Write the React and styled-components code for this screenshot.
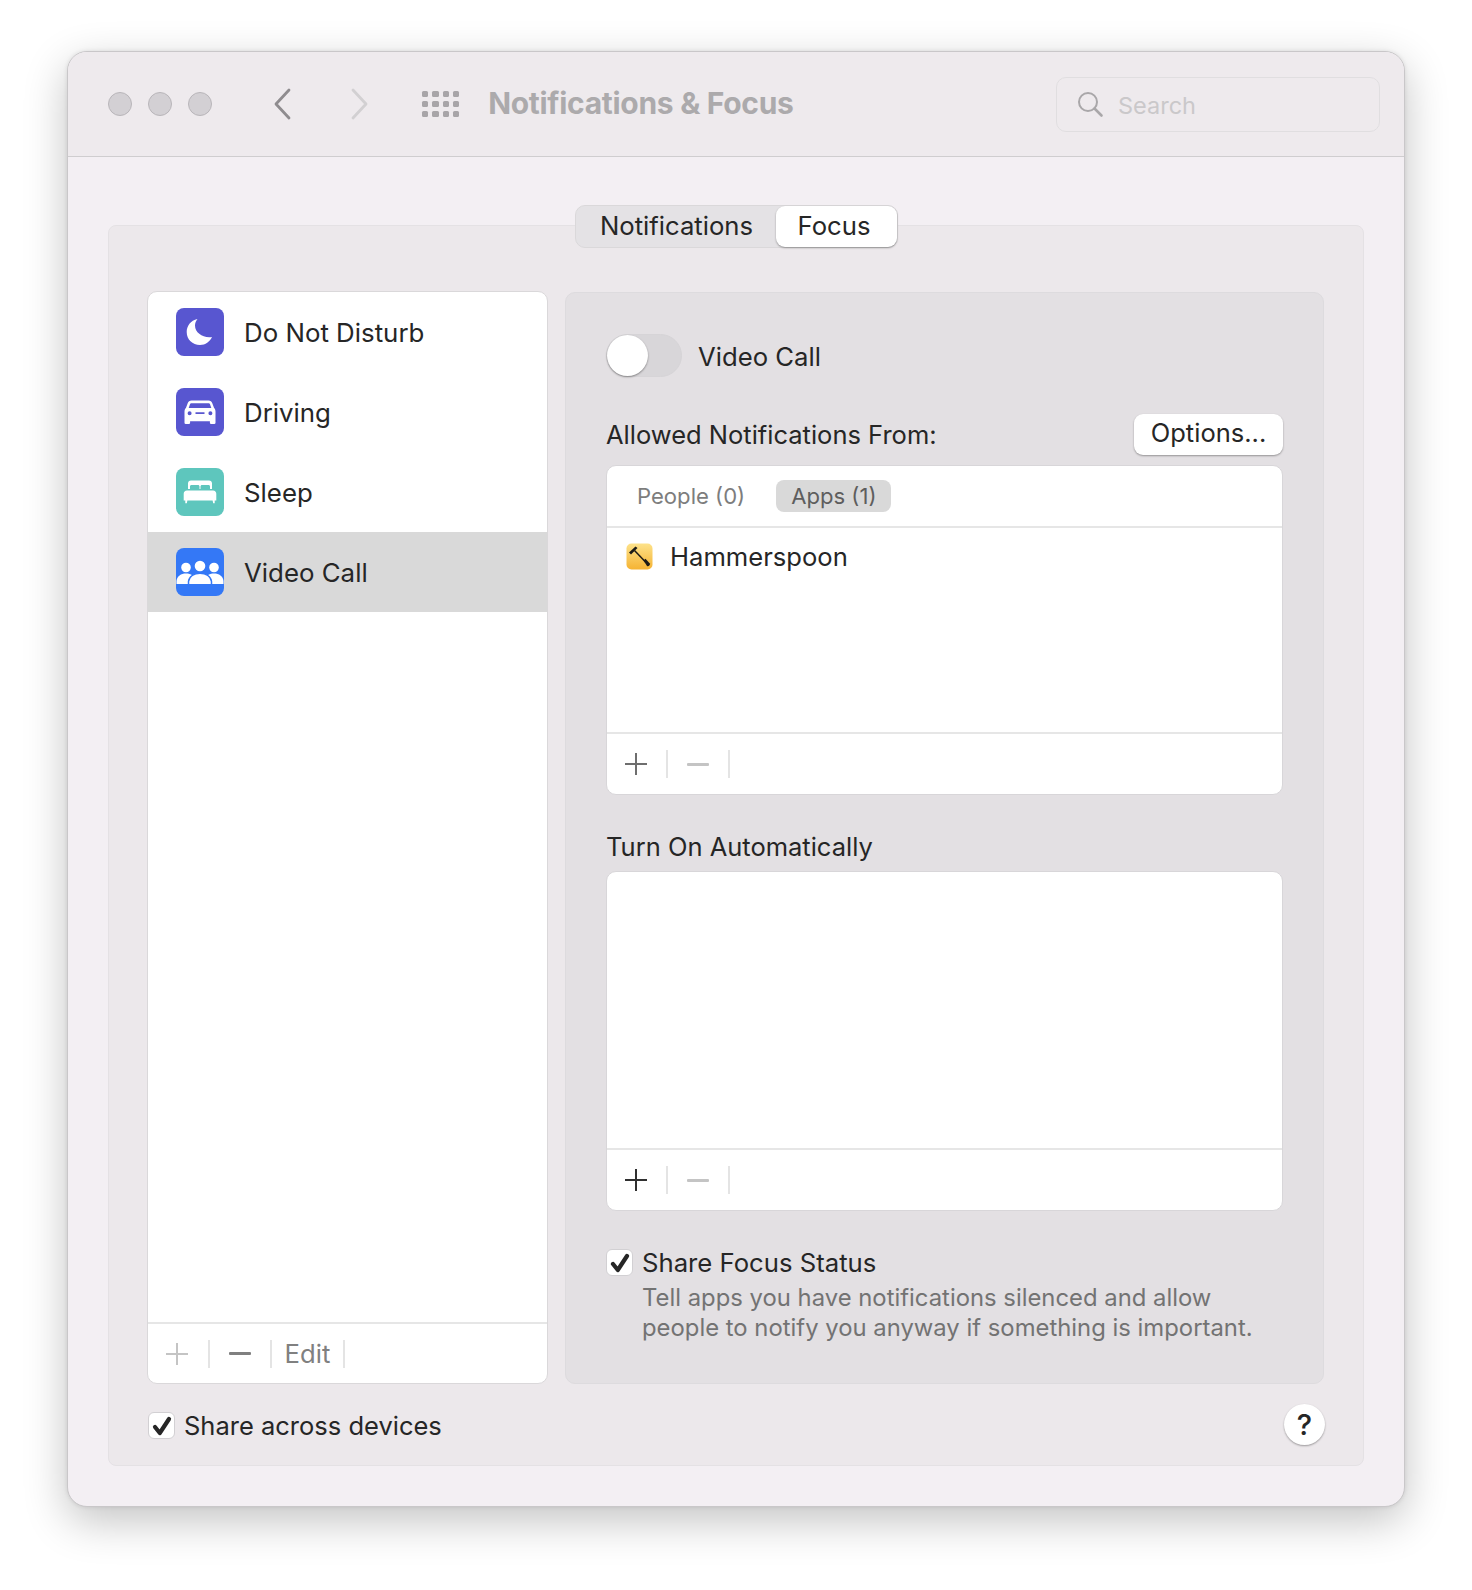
import React from "react";
import styled, { createGlobalStyle } from "styled-components";

const GlobalStyle = createGlobalStyle`
  html, body {
    margin: 0;
    background: #ffffff;
    font-family: Inter, "Liberation Sans", sans-serif;
    color: #262626;
  }
`;

const MoonIcon = () => (
  <svg width="48" height="48" viewBox="0 0 48 48">
    <path
      fill="#fff"
      d="M21.5 11C14.5 12.5 10.7 18 10.7 24C10.7 31.5 16.5 37 24 37C29.5 37 33.8 33.5 36 29C27.5 30.5 19 25 19 17.5C19 15 20 13 21.5 11Z"
    />
  </svg>
);

const CarIcon = () => (
  <svg width="48" height="48" viewBox="0 0 48 48">
    <path
      fill="#fff"
      fillRule="evenodd"
      d="M15.5 12.5H32.500C34.500 12.500 35.600 13.500 36.200 15L38 19.800C39.200 21 39.500 22.200 39.500 24V34.800A1.300 1.300 0 0 1 38.200 36.100H35.200A1.300 1.300 0 0 1 33.900 34.800V33.300H14.100V34.800A1.300 1.300 0 0 1 12.800 36.100H9.800A1.300 1.300 0 0 1 8.500 34.800V24C8.500 22.200 8.800 21 10 19.800L11.800 15C12.400 13.500 13.500 12.500 15.500 12.500ZM15.500 15.200C14.800 15.200 14.300 15.500 14 16.300L12.700 19.900H35.300L34 16.300C33.700 15.500 33.200 15.200 32.500 15.200ZM13.600 23.200A2 2 0 1 0 13.600 27.200A2 2 0 1 0 13.600 23.200ZM34.400 23.200A2 2 0 1 0 34.400 27.200A2 2 0 1 0 34.400 23.200ZM19.500 24.300V26.100H28.500V24.300Z"
    />
  </svg>
);

const BedIcon = () => (
  <svg width="48" height="48" viewBox="0 0 48 48">
    <path
      fill="#fff"
      fillRule="evenodd"
      d="M12 21V15.500C12 13.600 13.200 12.500 15 12.500H33C34.800 12.500 36 13.600 36 15.500V21H34V18.500C34 17.600 33.400 17 32.500 17H26C25.100 17 24.500 17.600 24.500 18.500V21H23.500V18.500C23.500 17.600 22.900 17 22 17H15.500C14.600 17 14 17.600 14 18.500V21ZM11 22.500H37C39 22.500 40.300 23.800 40.300 25.800V32.500H38.700V35.200H37.200L36.600 32.500H11.400L10.800 35.200H9.300V32.500H7.700V25.800C7.700 23.800 9 22.500 11 22.500Z"
    />
  </svg>
);

const PeopleIcon = () => (
  <svg width="48" height="48" viewBox="0 0 48 48">
    <g fill="#fff">
      <circle cx="10" cy="19.500" r="4.800" />
      <circle cx="24" cy="18" r="5.300" />
      <circle cx="38" cy="19.500" r="4.800" />
      <path d="M0.500 36V33C1 28 5 25.500 10 25.500C15 25.500 19 28 19.500 33V36Z" />
      <path d="M28.500 36V33C29 28 33 25.500 38 25.500C43 25.500 47 28 47.500 33V36Z" />
      <path
        stroke="#3478f6"
        strokeWidth="1.500"
        d="M12.500 36.750V33.500C13 28.500 18 25.250 24 25.250C30 25.250 35 28.500 35.500 33.500V36.750Z"
      />
    </g>
  </svg>
);

const HammerIcon = () => (
  <svg width="27" height="27" viewBox="0 0 27 27">
    <defs>
      <linearGradient id="hammerBg" x1="0" y1="0" x2="0" y2="1">
        <stop offset="0" stopColor="#fde28a" />
        <stop offset="1" stopColor="#f5b333" />
      </linearGradient>
    </defs>
    <rect width="26" height="26" x="0.500" y="0.500" rx="5" fill="url(#hammerBg)" />
    <path d="M3 9.500L9.500 3.500L11.500 5L5 11.500Z" fill="#1c1a16" />
    <path d="M8.500 7.500L20 19.500" stroke="#1c1a16" strokeWidth="1.500" />
    <path d="M17.500 17.500L19.500 15.800L23.800 20.500C24.500 21.800 22.500 23.800 21 23Z" fill="#1c1a16" />
  </svg>
);

const SearchIcon = () => (
  <svg width="28" height="28" viewBox="0 0 28 28" fill="none" stroke="#a9a7a9">
    <circle cx="12" cy="12" r="9" strokeWidth="2" />
    <path d="M18.500 18.500L25.500 25.500" strokeWidth="2.600" strokeLinecap="round" />
  </svg>
);

const Chevron = ({ flip, color }) => (
  <svg width="20" height="32" viewBox="0 0 20 32" fill="none">
    <path
      d={flip ? "M3 2L16 16L3 30" : "M17 2L4 16L17 30"}
      stroke={color}
      strokeWidth="2.800"
      strokeLinecap="round"
      strokeLinejoin="round"
    />
  </svg>
);

const CheckMark = () => (
  <svg width="22" height="22" viewBox="0 0 22 22" fill="none">
    <path
      d="M4 12L8.800 18L18 4"
      stroke="#262626"
      strokeWidth="4.200"
      strokeLinecap="round"
      strokeLinejoin="round"
    />
  </svg>
);

const Page = styled.div`
  width: 1472px;
  height: 1590px;
  padding: 51px 0 0 67px;
  box-sizing: border-box;
`;

const Window = styled.div`
  width: 1338px;
  height: 1456px;
  box-sizing: border-box;
  background: #f3eff3;
  border: 1px solid #c9c7c9;
  border-radius: 20px;
  box-shadow: 0 14px 44px rgba(0, 0, 0, 0.24), 0 0 4px rgba(0, 0, 0, 0.1);
  overflow: hidden;
`;

const TitleBar = styled.header`
  height: 105px;
  box-sizing: border-box;
  background: #eeeaed;
  border-bottom: 1px solid #cfcdcf;
  display: flex;
  align-items: center;
  padding: 0 24px 0 40px;
`;

const Lights = styled.div`
  display: flex;
  gap: 16px;
  margin-right: 60px;
`;

const Light = styled.span`
  width: 24px;
  height: 24px;
  box-sizing: border-box;
  border-radius: 50%;
  background: #d3d0d4;
  border: 1px solid #b9b6ba;
`;

const NavButtons = styled.div`
  display: flex;
  gap: 58px;
  margin-right: 52px;
`;

const NavButton = styled.span`
  display: flex;
`;

const AppGrid = styled.div`
  display: grid;
  grid-template-columns: repeat(4, 6.300px);
  grid-auto-rows: 6.300px;
  gap: 4px;
  margin-right: 29px;
`;

const AppDot = styled.span`
  background: #a8a5a8;
  border-radius: 1.500px;
`;

const Title = styled.h1`
  flex: 1;
  margin: 0;
  padding-bottom: 2px;
  font-size: 30px;
  font-weight: 700;
  letter-spacing: -0.3px;
  color: #acaaac;
`;

const SearchField = styled.div`
  width: 324px;
  height: 55px;
  box-sizing: border-box;
  border: 1.500px solid #e0dee0;
  border-radius: 10px;
  display: flex;
  align-items: center;
  gap: 14px;
  padding-left: 19px;
`;

const SearchText = styled.span`
  font-size: 23.500px;
  color: #cac8ca;
  margin-top: 3px;
`;

const Content = styled.main`
  padding: 68px 40px 0;
`;

const GroupBox = styled.section`
  height: 1241px;
  box-sizing: border-box;
  background: #ece8eb;
  border: 1px solid #e4e1e4;
  border-radius: 8px;
  padding: 0 38px;
  display: flex;
  flex-direction: column;
`;

const SegmentBar = styled.div`
  align-self: center;
  margin-top: -21px;
  height: 43px;
  box-sizing: border-box;
  display: flex;
  align-items: stretch;
  background: #e4e2e5;
  border: 1px solid #dad8da;
  border-radius: 10px;
`;

const Segment = styled.div`
  font-size: 25.700px;
  display: flex;
  align-items: center;
  justify-content: center;
  box-sizing: border-box;
  padding: ${({ $active }) => ($active ? "0 4px 3px 0" : "0 0 3px 2px")};
  width: ${({ $w }) => $w}px;
  ${({ $active }) =>
    $active &&
    `
    background: #fff;
    border-radius: 9px;
    box-shadow: 0 1px 2px rgba(0, 0, 0, 0.35);
  `}
`;

const Columns = styled.div`
  display: grid;
  grid-template-columns: 401px 759px;
  gap: 17px;
  margin-top: 43px;
  height: 1093px;
`;

const SideList = styled.div`
  background: #fff;
  border: 1px solid #dad8da;
  border-radius: 10px;
  display: flex;
  flex-direction: column;
  overflow: hidden;
`;

const SideRows = styled.div`
  flex: 1;
`;

const SideRow = styled.div`
  height: 80px;
  display: flex;
  align-items: center;
  gap: 20px;
  padding-left: 28px;
  font-size: 25.850px;
  background: ${({ $selected }) => ($selected ? "#d9d9d9" : "transparent")};
`;

const FocusIcon = styled.span`
  width: 48px;
  height: 48px;
  border-radius: 8px;
  display: flex;
  background: ${({ $color }) => $color};
  overflow: hidden;
`;

const ListFooter = styled.div`
  height: ${({ $h }) => $h || 62}px;
  flex: none;
  box-sizing: border-box;
  border-top: 2px solid #e6e6e6;
  display: flex;
  align-items: center;
`;

const FooterCell = styled.span`
  width: ${({ $w }) => $w || 61}px;
  height: 28px;
  box-sizing: border-box;
  display: flex;
  align-items: center;
  justify-content: center;
  border-right: 2px solid #e4e4e4;
  font-size: 25.700px;
  color: #808080;
`;

const PlusMark = styled.span`
  position: relative;
  width: 22px;
  height: 22px;
  margin-right: 2px;
  &::before,
  &::after {
    content: "";
    position: absolute;
    background: ${({ $color }) => $color};
  }
  &::before {
    left: 0;
    right: 0;
    top: 10px;
    height: 2px;
  }
  &::after {
    top: 0;
    bottom: 0;
    left: 10px;
    width: 2px;
  }
`;

const MinusMark = styled.span`
  width: 22px;
  height: 3px;
  border-radius: 1px;
  background: ${({ $color }) => $color};
`;

const DetailPanel = styled.div`
  margin-top: 1px;
  background: #e3e0e3;
  border: 1px solid #dddbde;
  border-radius: 10px;
  padding: 41px 40px 0;
`;

const ToggleRow = styled.div`
  display: flex;
  align-items: center;
  gap: 16px;
  height: 43px;
  font-size: 25.700px;
`;

const ToggleLabel = styled.span`
  margin-top: 2px;
`;

const Toggle = styled.span`
  position: relative;
  width: 76px;
  height: 43px;
  box-sizing: border-box;
  border: 1px solid #d6d4d7;
  border-radius: 22px;
  background: #d8d6d9;
  &::after {
    content: "";
    position: absolute;
    left: 0;
    top: 0;
    width: 41px;
    height: 41px;
    border-radius: 50%;
    background: #fff;
    box-shadow: 0 1px 2px rgba(0, 0, 0, 0.4);
  }
`;

const LabelRow = styled.div`
  margin-top: 37px;
  margin-bottom: 10px;
  height: 41px;
  display: flex;
  align-items: center;
  justify-content: space-between;
  font-size: 25.500px;
`;

const PlainLabel = styled.div`
  margin-top: 36px;
  margin-bottom: 10px;
  height: 30px;
  display: flex;
  align-items: center;
  font-size: 25.500px;
`;

const OptionsButton = styled.span`
  width: 149px;
  height: 41px;
  display: flex;
  align-items: center;
  justify-content: center;
  padding-bottom: 4px;
  box-sizing: border-box;
  border-radius: 9px;
  background: #fff;
  font-size: 25.500px;
  box-shadow: 0 1px 2px rgba(0, 0, 0, 0.35);
`;

const ListBox = styled.div`
  height: ${({ $h }) => $h}px;
  box-sizing: border-box;
  background: #fff;
  border: 1px solid #d8d6d9;
  border-radius: 10px;
  display: flex;
  flex-direction: column;
`;

const ScopeTabs = styled.div`
  height: 62px;
  flex: none;
  box-sizing: border-box;
  border-bottom: 2px solid #e6e6e6;
  display: flex;
  align-items: center;
  gap: 16px;
  padding: 0 0 0 15px;
  font-size: 22.100px;
`;

const ScopeTab = styled.span`
  height: 32px;
  border-radius: 8px;
  padding: 0 15px;
  display: flex;
  align-items: center;
  color: ${({ $active }) => ($active ? "#5e5e5e" : "#7d7d7d")};
  background: ${({ $active }) => ($active ? "#d9d9d9" : "transparent")};
`;

const ListBody = styled.div`
  flex: 1;
`;

const AppRow = styled.div`
  display: flex;
  align-items: center;
  gap: 17px;
  padding: 13px 0 0 19px;
  font-size: 25.600px;
`;

const ShareRow = styled.label`
  display: flex;
  align-items: center;
  gap: 9px;
  font-size: ${({ $size }) => $size}px;
  margin-top: ${({ $top }) => $top}px;
`;

const CheckBox = styled.span`
  width: 27px;
  height: 27px;
  flex: none;
  box-sizing: border-box;
  display: flex;
  align-items: center;
  justify-content: center;
  background: #fff;
  border: 1px solid #d2d0d3;
  border-radius: 6px;
`;

const HelpText = styled.p`
  margin: 5px 0 0 36px;
  font-size: 23.850px;
  line-height: 30px;
  color: #737373;
  white-space: nowrap;
`;

const BottomRow = styled.div`
  display: flex;
  align-items: center;
  justify-content: space-between;
  margin-top: 20px;
  padding-left: 1px;
`;

const HelpButton = styled.span`
  width: 41px;
  height: 41px;
  border-radius: 50%;
  background: #fff;
  box-shadow: 0 1px 2px rgba(0, 0, 0, 0.35);
  display: flex;
  align-items: center;
  justify-content: center;
  font-size: 29px;
  font-weight: 500;
  margin: 0 0 2px 0;
`;

const focusModes = [
  { name: "Do Not Disturb", color: "#5856d0", Icon: MoonIcon },
  { name: "Driving", color: "#5856d0", Icon: CarIcon },
  { name: "Sleep", color: "#5ec6bd", Icon: BedIcon },
  { name: "Video Call", color: "#3478f6", Icon: PeopleIcon, selected: true },
];

const EditFooter = ({ plus, minus }) => (
  <ListFooter>
    <FooterCell>
      <PlusMark $color={plus} />
    </FooterCell>
    <FooterCell $w={62}>
      <MinusMark $color={minus} />
    </FooterCell>
  </ListFooter>
);

const App = () => (
  <Page>
    <GlobalStyle />
    <Window>
      <TitleBar>
        <Lights>
          <Light />
          <Light />
          <Light />
        </Lights>
        <NavButtons>
          <NavButton>
            <Chevron color="#8f8c8f" />
          </NavButton>
          <NavButton>
            <Chevron flip color="#d2d0d2" />
          </NavButton>
        </NavButtons>
        <AppGrid>
          {Array.from({ length: 12 }, (_, i) => (
            <AppDot key={i} />
          ))}
        </AppGrid>
        <Title>Notifications &amp; Focus</Title>
        <SearchField>
          <SearchIcon />
          <SearchText>Search</SearchText>
        </SearchField>
      </TitleBar>

      <Content>
        <GroupBox>
          <SegmentBar>
            <Segment $w={200}>Notifications</Segment>
            <Segment $w={121} $active>
              Focus
            </Segment>
          </SegmentBar>

          <Columns>
            <SideList>
              <SideRows>
                {focusModes.map(({ name, color, Icon, selected }) => (
                  <SideRow key={name} $selected={selected}>
                    <FocusIcon $color={color}>
                      <Icon />
                    </FocusIcon>
                    {name}
                  </SideRow>
                ))}
              </SideRows>
              <ListFooter $h={61}>
                <FooterCell $w={62}>
                  <PlusMark $color="#c4c4c4" />
                </FooterCell>
                <FooterCell $w={62}>
                  <MinusMark $color="#808080" />
                </FooterCell>
                <FooterCell $w={73}>Edit</FooterCell>
              </ListFooter>
            </SideList>

            <DetailPanel>
              <ToggleRow>
                <Toggle />
                <ToggleLabel>Video Call</ToggleLabel>
              </ToggleRow>

              <LabelRow>
                Allowed Notifications From:
                <OptionsButton>Options...</OptionsButton>
              </LabelRow>
              <ListBox $h={330}>
                <ScopeTabs>
                  <ScopeTab>People (0)</ScopeTab>
                  <ScopeTab $active>Apps (1)</ScopeTab>
                </ScopeTabs>
                <ListBody>
                  <AppRow>
                    <HammerIcon />
                    Hammerspoon
                  </AppRow>
                </ListBody>
                <EditFooter plus="#6e6e6e" minus="#c4c4c4" />
              </ListBox>

              <PlainLabel>Turn On Automatically</PlainLabel>
              <ListBox $h={340}>
                <ListBody />
                <EditFooter plus="#303030" minus="#c4c4c4" />
              </ListBox>

              <ShareRow $top={36} $size={25.7}>
                <CheckBox>
                  <CheckMark />
                </CheckBox>
                Share Focus Status
              </ShareRow>
              <HelpText>
                Tell apps you have notifications silenced and allow
                <br />
                people to notify you anyway if something is important.
              </HelpText>
            </DetailPanel>
          </Columns>

          <BottomRow>
            <ShareRow $top={0} $size={25.5}>
              <CheckBox>
                <CheckMark />
              </CheckBox>
              Share across devices
            </ShareRow>
            <HelpButton>?</HelpButton>
          </BottomRow>
        </GroupBox>
      </Content>
    </Window>
  </Page>
);

export default App;
